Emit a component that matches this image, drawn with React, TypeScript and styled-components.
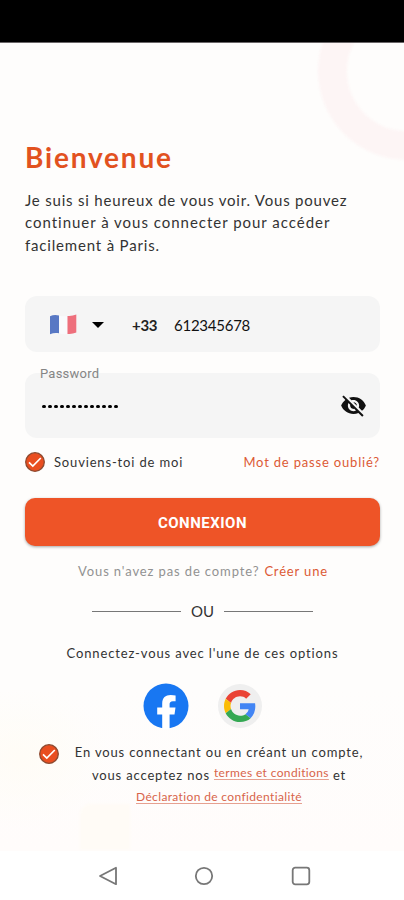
import React from 'react';
import styled, { createGlobalStyle } from 'styled-components';

const GlobalStyle = createGlobalStyle`
  *, *::before, *::after { box-sizing: border-box; }
  body { margin: 0; background: #fff; }
  button { font: inherit; border: 0; padding: 0; background: none; }
`;

const Screen = styled.div`
  width: 404px;
  height: 900px;
  display: flex;
  flex-direction: column;
  overflow: hidden;
  font-family: Lato, 'Open Sans', sans-serif;
  color: #333;
  background: #fff;
`;

const StatusBar = styled.header`
  height: 43px;
  flex: none;
  background: #000;
  border-bottom: 1px solid #6a6668;
`;

const Main = styled.main`
  position: relative;
  height: 808px;
  flex: none;
  display: flex;
  flex-direction: column;
  padding: 98px 24px 0 25px;
  overflow: hidden;
  background:
    radial-gradient(ellipse 90px 70px at 20px 715px, #fffcf6 0%, rgba(255, 252, 246, 0) 100%),
    linear-gradient(#fefdfc 0%, #fefdfc 80%, #fffcfb 100%);
`;

const Ring = styled.div`
  position: absolute;
  left: 318px;
  top: -61px;
  width: 178px;
  height: 178px;
  border: 29px solid #fdf5f5;
  border-radius: 50%;
  filter: blur(1px);
`;

const Patch = styled.div`
  position: absolute;
  left: 80px;
  top: 761px;
  width: 50px;
  height: 46px;
  border-radius: 10px 0 0 0;
  background: #fffbf6;
  filter: blur(1px);
`;

const Text = styled.span<{
  $size: number;
  $spacing?: number;
  $color?: string;
  $weight?: number;
  $line?: number;
}>`
  display: block;
  white-space: pre;
  font-size: ${(p) => p.$size}px;
  line-height: ${(p) => p.$line ?? 20}px;
  letter-spacing: ${(p) => p.$spacing ?? 0.84}px;
  font-weight: ${(p) => p.$weight ?? 400};
  color: ${(p) => p.$color ?? '#333'};
`;

const Title = styled.h1`
  position: relative;
  margin: 0 0 16px;
  font-size: 28px;
  line-height: 32px;
  font-weight: 700;
  letter-spacing: 1.8px;
  color: #e2521f;
`;

const Intro = styled.div`
  height: 107px;
`;

const Field = styled.div<{ $height: number }>`
  height: ${(p) => p.$height}px;
  flex: none;
  display: flex;
  align-items: center;
  border-radius: 12px;
  background: #f5f5f5;
`;

const PhoneField = styled(Field)`
  margin-bottom: 21px;
  padding: 2px 0 0 24px;
`;

const Caret = styled.span`
  margin: 0 28px 0 15px;
  border: 6px solid transparent;
  border-top-color: #000;
  border-bottom: 0;
`;

const Prefix = styled.span`
  width: 42px;
`;

const PasswordField = styled(Field)`
  position: relative;
  justify-content: space-between;
  padding: 0 13px 0 16px;
`;

const FloatingLabel = styled.label`
  position: absolute;
  left: 15px;
  top: -7px;
  font: 13px/16px Roboto, sans-serif;
  letter-spacing: 0.23px;
  color: #858585;
`;

const Dots = styled.div`
  display: flex;
  gap: 2.35px;
  padding: 2px 0 0 1px;
`;

const Dot = styled.i`
  width: 3.7px;
  height: 3.7px;
  border-radius: 50%;
  background: #000;
`;

const OptionsRow = styled.div`
  display: flex;
  align-items: center;
  height: 24px;
  margin-top: 12px;
`;

const RememberLabel = styled.label`
  display: flex;
  align-items: center;
  gap: 9px;
  margin-right: auto;
`;

const Submit = styled.button`
  height: 48px;
  flex: none;
  margin-top: 24px;
  border-radius: 10px;
  background: #ee5427;
  color: #fff;
  font: 700 15px/50px Roboto, sans-serif;
  letter-spacing: 0.5px;
  box-shadow: 0 1px 3px rgba(0, 0, 0, 0.35);
`;

const SignupRow = styled.div`
  display: flex;
  justify-content: center;
  gap: 5px;
  margin-top: 15px;
  padding-left: 1px;
`;

const Divider = styled.div`
  display: flex;
  align-items: center;
  justify-content: center;
  gap: 10px;
  margin-top: 20px;
  height: 20px;
`;

const Rule = styled.span`
  width: 89px;
  height: 1px;
  background: #777;
`;

const SocialTitle = styled.div`
  display: flex;
  justify-content: center;
  margin-top: 22px;
`;

const SocialRow = styled.div`
  display: flex;
  justify-content: center;
  align-items: center;
  gap: 29px;
  height: 46px;
  margin-top: 20px;
`;

const GoogleButton = styled.button`
  width: 44px;
  height: 44px;
  display: grid;
  place-items: center;
  border-radius: 50%;
  background: #efefef;
`;

const FacebookButton = styled.button`
  width: 46px;
  height: 46px;
`;

const Terms = styled.div`
  display: flex;
  gap: 15px;
  margin-top: 12px;
  padding-left: 14px;
`;

const TermsMark = styled.div`
  padding-top: 3px;
`;

const TermsText = styled.div`
  width: 290px;
  display: flex;
  flex-direction: column;
  align-items: center;
`;

const TermsLine = styled.div`
  display: flex;
  gap: 4px;
`;

const TermsLink = styled.a<{ $shift?: number }>`
  display: block;
  margin-top: ${(p) => p.$shift ?? 0}px;
  white-space: pre;
  font-size: 12px;
  line-height: 20px;
  letter-spacing: 0.36px;
  color: #d8644a;
  text-decoration: underline;
  text-decoration-color: #e6a090;
  text-underline-offset: 2px;
`;

const NavBar = styled.nav`
  flex: 1;
  display: flex;
  justify-content: center;
  align-items: center;
  gap: 76.5px;
  padding-left: 4px;
  background: #fff;
`;

const Flag = () => (
  <svg width="28" height="22" viewBox="0 0 28 22">
    <path d="M1 2.2C4 .8 7 .7 10 1.5v17.8C7 18.6 4 18.9 1 20.3z" fill="#5878c4" />
    <path d="M10 1.5c3 .9 5.5 1.2 8.500.4v18c-3 .8-5.500.4-8.500-.6z" fill="#f9fafc" />
    <path d="M18.500 1.900c3 .3 6-.2 8.800-1.300v18c-2.800 1.200-5.800 1.700-8.800 1.300z" fill="#ee6f7c" />
  </svg>
);

const EyeOff = () => (
  <svg width="27" height="27" viewBox="0 0 24 24" fill="#111">
    <path d="M12 7c2.760 0 5 2.240 5 5 0 .65-.13 1.260-.36 1.830l2.920 2.920c1.510-1.260 2.700-2.890 3.430-4.750-1.730-4.390-6-7.500-11-7.500-1.400 0-2.740.25-3.980.7l2.160 2.160C10.740 7.130 11.350 7 12 7zM2 4.270l2.280 2.280.46.46C3.080 8.300 1.780 10.020 1 12c1.730 4.390 6 7.500 11 7.500 1.550 0 3.030-.3 4.380-.84l.42.42L19.730 22 21 20.730 3.270 3 2 4.270zM7.530 9.800l1.550 1.550c-.05.21-.08.43-.08.65 0 1.660 1.340 3 3 3 .22 0 .44-.03.65-.08l1.550 1.550c-.67.33-1.410.53-2.200.53-2.760 0-5-2.240-5-5 0-.79.2-1.530.53-2.200zm4.310-.78l3.150 3.150.02-.16c0-1.660-1.340-3-3-3l-.17.01z" />
  </svg>
);

const CheckMark = () => (
  <svg width="20" height="20" viewBox="0 0 20 20">
    <circle cx="10" cy="10" r="9.3" fill="#e94e20" stroke="#8c4a30" strokeWidth="1.3" />
    <path d="M4 10.300l3.800 3.700 8-8" fill="none" stroke="#fff" strokeWidth="1.7" />
  </svg>
);

const Facebook = () => (
  <svg width="46" height="46" viewBox="0 0 46 46">
    <circle cx="23" cy="23" r="22.5" fill="#1877f2" />
    <path
      d="M19.200 46V31.500h-5V24.500h5V20.500c0-5.600 3.300-8.400 8.400-8.400 1.900 0 3.700.2 5 .4v5.700h-2.700c-2.500 0-3.300 1.300-3.300 3.100v3.200h5.900l-1 7h-4.900V46z"
      fill="#fff"
    />
  </svg>
);

const Google = () => (
  <svg width="32" height="32" viewBox="0 0 48 48">
    <path fill="#ea4335" d="M24 9.500c3.540 0 6.710 1.220 9.210 3.600l6.850-6.850C35.900 2.380 30.470 0 24 0 14.620 0 6.510 5.380 2.560 13.220l7.980 6.190C12.430 13.720 17.740 9.500 24 9.500z" />
    <path fill="#4285f4" d="M46.980 24.550c0-1.570-.15-3.090-.38-4.550H24v9.020h12.940c-.58 2.960-2.260 5.480-4.780 7.180l7.730 6c4.510-4.180 7.090-10.360 7.090-17.650z" />
    <path fill="#fbbc05" d="M10.530 28.590c-.48-1.450-.76-2.990-.76-4.590s.27-3.140.76-4.590l-7.980-6.190C.92 16.460 0 20.120 0 24c0 3.880.92 7.540 2.560 10.780l7.970-6.190z" />
    <path fill="#34a853" d="M24 48c6.480 0 11.930-2.130 15.890-5.810l-7.730-6c-2.150 1.450-4.920 2.300-8.160 2.300-6.260 0-11.570-4.220-13.470-9.910l-7.980 6.190C6.510 42.620 14.620 48 24 48z" />
  </svg>
);

const NavIcon = ({ children }: { children: React.ReactNode }) => (
  <svg width="20" height="20" viewBox="0 0 20 20" fill="none" stroke="#777" strokeWidth="1.8" strokeLinejoin="round">
    {children}
  </svg>
);

export default function App() {
  return (
    <>
      <GlobalStyle />
      <Screen>
        <StatusBar />
        <Main>
          <Ring />
          <Patch />
          <Title>Bienvenue</Title>
          <Intro>
            <Text $size={15} $line={22.4} $spacing={0.8}>Je suis si heureux de vous voir. Vous pouvez</Text>
            <Text $size={15} $line={22.4} $spacing={0.98}>continuer à vous connecter pour accéder</Text>
            <Text $size={15} $line={22.4} $spacing={0.82}>facilement à Paris.</Text>
          </Intro>

          <PhoneField $height={56}>
            <Flag />
            <Caret />
            <Prefix>
              <Text $size={15} $spacing={-0.3} $weight={700} $color="#222">+33</Text>
            </Prefix>
            <Text $size={15} $spacing={-0.25} $color="#111">612345678</Text>
          </PhoneField>

          <PasswordField $height={65}>
            <FloatingLabel>Password</FloatingLabel>
            <Dots>
              {Array.from({ length: 13 }, (_, i) => <Dot key={i} />)}
            </Dots>
            <EyeOff />
          </PasswordField>

          <OptionsRow>
            <RememberLabel>
              <CheckMark />
              <Text $size={13} $line={22}>Souviens-toi de moi</Text>
            </RememberLabel>
            <Text $size={13} $line={22} $spacing={0.82} $color="#dc5a35">Mot de passe oublié?</Text>
          </OptionsRow>

          <Submit>CONNEXION</Submit>

          <SignupRow>
            <Text $size={13} $spacing={0.88} $color="#929292">Vous n'avez pas de compte?</Text>
            <Text $size={13} $color="#dc5a35">Créer une</Text>
          </SignupRow>

          <Divider>
            <Rule />
            <Text $size={15} $spacing={0}>OU</Text>
            <Rule />
          </Divider>

          <SocialTitle>
            <Text $size={13} $spacing={0.86}>Connectez-vous avec l'une de ces options</Text>
          </SocialTitle>

          <SocialRow>
            <FacebookButton aria-label="Facebook"><Facebook /></FacebookButton>
            <GoogleButton aria-label="Google"><Google /></GoogleButton>
          </SocialRow>

          <Terms>
            <TermsMark><CheckMark /></TermsMark>
            <TermsText>
              <Text $size={13} $line={22.5}>En vous connectant ou en créant un compte,</Text>
              <TermsLine>
                <Text $size={13} $line={22.5}>vous acceptez nos</Text>
                <TermsLink $shift={-1}>termes et conditions</TermsLink>
                <Text $size={13} $line={22.5}>et</Text>
              </TermsLine>
              <TermsLink $shift={1}>Déclaration de confidentialité</TermsLink>
            </TermsText>
          </Terms>
        </Main>
        <NavBar>
          <NavIcon><path d="M18 1.8v16.4L2 10z" /></NavIcon>
          <NavIcon><circle cx="10" cy="10" r="8.2" /></NavIcon>
          <NavIcon><rect x="1.7" y="1.7" width="16.6" height="16.6" rx="2.500" /></NavIcon>
        </NavBar>
      </Screen>
    </>
  );
}
